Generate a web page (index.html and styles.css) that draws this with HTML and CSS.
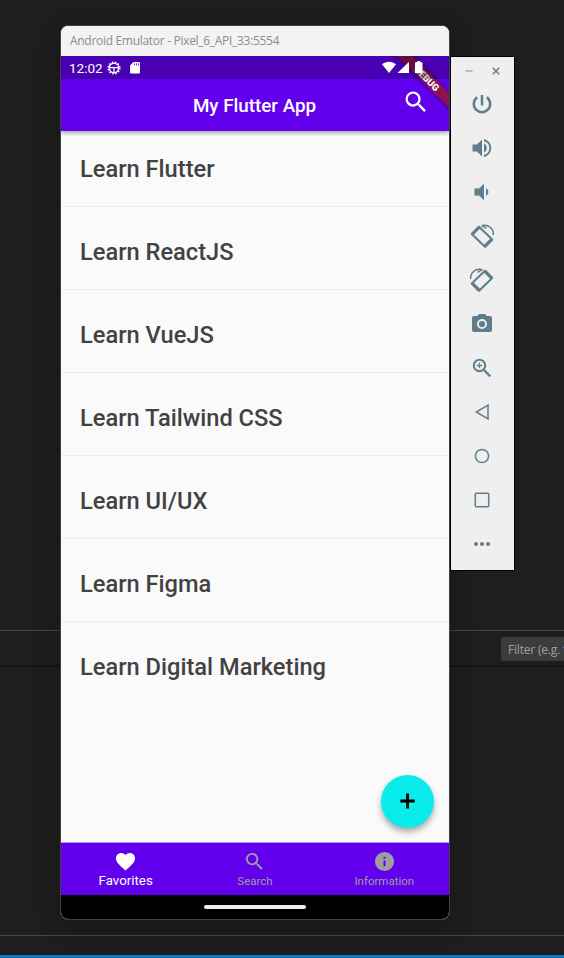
FILE: index.html
```html
<!DOCTYPE html>
<html lang="en">
<head>
<meta charset="utf-8">
<title>Android Emulator</title>
<link rel="stylesheet" href="styles.css">
</head>
<body>
<div class="desktop">
  <div class="editor">
    <div class="editor-top"></div>
    <div class="filter-bar"><div class="filter">Filter (e.g. t</div></div>
    <div class="editor-body"></div>
    <div class="editor-foot"></div>
    <div class="editor-status"></div>
  </div>

  <main class="phone">
    <div class="titlebar"><span>Android Emulator - Pixel_6_API_33:5554</span></div>
    <header class="top">
      <div class="statusbar">
        <span class="clock">12:02</span>
        <svg class="gear" width="14" height="14" viewBox="0 0 14 14" fill="none" stroke="#fff"><circle cx="7" cy="7" r="4.700" stroke-width="1.500"/><circle cx="7" cy="7" r="5.900" stroke-width="1.400" stroke-dasharray="1.600 1.490"/><path d="M3 6.700h8M7 7v4.200" stroke-width="1.200"/></svg>
        <svg class="sd" width="10" height="12" viewBox="0 0 10 12"><path fill="#fff" d="M3.500 0H9a1 1 0 0 1 1 1v9.500a1 1 0 0 1-1 1H1a1 1 0 0 1-1-1V3.500z"/><path stroke="#4b00b2" stroke-width=".8" d="M4.500 1.300v2M6.500 1.300v2M8.500 1.300v2"/></svg>
        <span class="signals">
          <svg width="38" height="14" viewBox="0 0 38 14" fill="#fff"><path d="M0 3.300C4-.1 10-.1 14 3.300L7 12z"/><path d="M27 .8V12H15.500z"/><path d="M33.700 1.300h1.500V0h3v1.300h1.600q.7 0 .7.700v9.500q0 .7-.7.700h-6.100q-.7 0-.7-.7V2q0-.7.7-.7z"/></svg>
        </span>
      </div>
      <div class="appbar">
        <h1>My Flutter App</h1>
        <svg class="search" width="28" height="28" viewBox="0 0 24 24" fill="#fff"><path d="M15.500 14h-.79l-.28-.27A6.471 6.471 0 0 0 16 9.500 6.500 6.500 0 1 0 9.500 16c1.610 0 3.090-.59 4.230-1.570l.27.28v.79l5 4.990L20.490 19l-4.990-5zm-6 0C7.010 14 5 11.990 5 9.500S7.010 5 9.500 5 14 7.010 14 9.500 11.990 14 9.500 14z"/></svg>
      </div>
      <div class="ribbon">DEBUG</div>
    </header>
    <ul class="list">
      <li>Learn Flutter</li>
      <li>Learn ReactJS</li>
      <li>Learn VueJS</li>
      <li>Learn Tailwind CSS</li>
      <li>Learn UI/UX</li>
      <li>Learn Figma</li>
      <li>Learn Digital Marketing</li>
    </ul>
    <button class="fab" aria-label="Add"><svg width="15" height="16" viewBox="0 0 15 16"><path d="M7.500 .5v15M.3 8h14.400" stroke="#000" stroke-width="3"/></svg></button>
    <nav class="nav">
      <div class="tab active"><svg width="23" height="23" viewBox="0 0 24 24"><path d="m12 21.350-1.450-1.320C5.400 15.360 2 12.280 2 8.500 2 5.420 4.420 3 7.500 3c1.740 0 3.410.81 4.500 2.090C13.090 3.810 14.760 3 16.500 3 19.580 3 22 5.420 22 8.500c0 3.780-3.400 6.860-8.550 11.540z"/></svg><span>Favorites</span></div>
      <div class="tab"><svg width="23" height="23" viewBox="0 0 24 24"><path d="M15.500 14h-.79l-.28-.27A6.471 6.471 0 0 0 16 9.500 6.500 6.500 0 1 0 9.500 16c1.610 0 3.090-.59 4.230-1.570l.27.28v.79l5 4.990L20.490 19l-4.990-5zm-6 0C7.010 14 5 11.990 5 9.500S7.010 5 9.500 5 14 7.010 14 9.500 11.990 14 9.500 14z"/></svg><span>Search</span></div>
      <div class="tab"><svg width="23" height="23" viewBox="0 0 24 24"><path fill-rule="evenodd" d="M12 2a10 10 0 1 0 0 20 10 10 0 0 0 0-20zm1 15h-2v-6h2zm0-8h-2V7h2z"/></svg><span>Information</span></div>
    </nav>
    <div class="gesture"><i></i></div>
  </main>

  <aside class="tools">
    <div class="window-buttons">
      <svg width="8" height="8" viewBox="0 0 8 8"><path d="M.5 4h7" stroke="#a5b5bd" stroke-width="1.600"/></svg>
      <svg width="8" height="8" viewBox="0 0 8 8"><path d="M.8.8l6.400 6.400M7.200.8L.8 7.200" stroke="#617d8b" stroke-width="1.400"/></svg>
    </div>
    <div class="tool"><svg viewBox="0 0 24 24" class="line thick"><path d="M12 3v10.500M7.200 5.300a8.200 8.200 0 1 0 9.600 0"/></svg></div>
    <div class="tool"><svg viewBox="0 0 24 24"><path d="M2.500 8.500v7H7l5 5v-17l-5 5zM14 7.500v9a5 5 0 0 0 0-9zM14 3v2.200a7 7 0 0 1 0 13.600V21a9.200 9.200 0 0 0 0-18z"/></svg></div>
    <div class="tool"><svg viewBox="0 0 24 24"><path d="M4.500 8.500v7H9l5 4.700V3.800l-5 4.700zM16 8v8a4.500 4.500 0 0 0 0-8z"/></svg></div>
    <div class="tool"><svg viewBox="0 0 24 24" class="line"><path d="M9.300 3L2 10.300l12.700 12.200 7.300-7.300z"/><path d="M9.300 3L2 10.300M14.700 22.500l7.300-7.300" stroke-width="3.200"/><path d="M12.500 1.500C18 0 24 4.500 23.300 11" stroke-width="1.500"/><path d="M11.500 1.300l5 3" stroke-width="1.500"/></svg></div>
    <div class="tool"><svg viewBox="0 0 24 24" class="line"><path d="M14.700 3l7.300 7.300L9.300 22.500 2 15.200z"/><path d="M14.700 3l7.300 7.300M9.300 22.500L2 15.200" stroke-width="3.200"/><path d="M11.500 1.500C6 0 0 4.500.7 11" stroke-width="1.500"/><path d="M12.500 1.300l-5 3" stroke-width="1.500"/></svg></div>
    <div class="tool camera"><svg viewBox="0 0 24 24"><path fill-rule="evenodd" d="M9 3L7.200 5H4a2 2 0 0 0-2 2v12a2 2 0 0 0 2 2h16a2 2 0 0 0 2-2V7a2 2 0 0 0-2-2h-3.200L15 3zm3 5a5 5 0 1 1 0 10 5 5 0 0 1 0-10zm0 1.900a3.100 3.100 0 1 0 0 6.200 3.100 3.100 0 0 0 0-6.200z"/></svg></div>
    <div class="tool"><svg viewBox="0 0 24 24" class="line"><circle cx="9.500" cy="9.500" r="5.700"/><path d="M14 14l6.300 6.300" stroke-width="2.400"/><path d="M9.500 6.800v5.400M6.800 9.500h5.400" stroke-width="1.300"/></svg></div>
    <div class="tool"><svg viewBox="0 0 24 24" class="line thin"><path d="M18 5v14L6.300 12z"/></svg></div>
    <div class="tool"><svg viewBox="0 0 24 24" class="line thin"><circle cx="12" cy="12" r="6.600"/></svg></div>
    <div class="tool"><svg viewBox="0 0 24 24" class="line thin"><rect x="5.300" y="5.300" width="13.400" height="13.400" rx="1"/></svg></div>
    <div class="tool"><svg viewBox="0 0 24 24"><circle cx="6" cy="12" r="2"/><circle cx="12" cy="12" r="2"/><circle cx="18" cy="12" r="2"/></svg></div>
  </aside>
</div>
</body>
</html>
```
FILE: styles.css
```css
* { box-sizing: border-box; }
body { margin: 0; background: #1e1e1e; font-family: Roboto, sans-serif; overflow: hidden; }
.desktop { position: relative; width: 564px; height: 958px; overflow: hidden; }

.editor { display: flex; flex-direction: column; height: 958px; background: #1e1e1e; }
.editor-top { height: 631px; border-bottom: 1px solid #444; }
.filter-bar { height: 34px; padding-top: 6px; display: flex; justify-content: flex-end; }
.filter { width: 63px; height: 24px; padding-left: 7px; border-radius: 2px 0 0 2px; background: #3c3c3c; color: #a0a0a0; font: 12px/26px "Open Sans", sans-serif; letter-spacing: -0.200px; white-space: nowrap; overflow: hidden; }
.editor-body { height: 270px; border-top: 2px solid #141414; }
.editor-foot { height: 20px; border-top: 1px solid #444; }
.editor-status { height: 3px; background: #0b76c5; }

.phone { position: absolute; left: 60px; top: 25px; width: 390px; height: 895px; display: flex; flex-direction: column; border: 1px solid #414141; border-radius: 8px; background: #fafafa; overflow: hidden; box-shadow: 0 6px 24px rgba(0, 0, 0, .3); }
.titlebar { height: 30px; padding-left: 9px; background: #f3f3f3; color: #8c8c8c; font: 12px/30px "Open Sans", sans-serif; letter-spacing: -0.300px; white-space: nowrap; }
.top { position: relative; z-index: 1; height: 75px; flex: none; background: #6200ee; color: #fff; box-shadow: 0 2px 4px rgba(0, 0, 0, .35); clip-path: inset(0 0 -10px 0); }
.top::before { content: ""; position: absolute; z-index: 1; inset: 0 0 auto; height: 23px; background: rgba(0, 0, 0, .25); }
.statusbar { position: relative; z-index: 2; height: 23px; display: flex; align-items: center; padding-left: 8px; }
.clock { width: 33px; font-size: 13.500px; line-height: 24px; }
.gear { margin-left: 5px; }
.sd { margin-left: 9px; }
.signals { height: 14px; margin: 0 29px 0 auto; }
.signals svg { display: block; overflow: visible; }
.appbar { height: 52px; display: grid; grid-template-columns: 1fr 28px; align-items: center; padding-right: 19px; }
h1 { margin: 0; padding: 2px 0 0 46px; text-align: center; font-size: 18.800px; line-height: 24px; font-weight: 500; white-space: nowrap; }
.search { margin-top: -6px; }
.ribbon { position: absolute; left: 315.500px; top: 16.800px; width: 100px; height: 11.400px; transform: rotate(45deg); background: #8d1253; box-shadow: 0 0 5px rgba(0, 0, 0, .5); color: #fff; text-align: center; font-size: 9.500px; line-height: 11.400px; font-weight: 900; }

.list { margin: 0; padding: 0; list-style: none; height: 711px; flex: none; }
.list li { height: 83px; padding: 4px 0 0 19px; border-bottom: 1px solid #ececec; color: #424242; font-size: 23.650px; line-height: 82px; font-weight: 500; }
.list li:first-child { height: 76px; padding-top: 1px; line-height: 75px; }
.list li:last-child { border: 0; }
.fab { position: absolute; right: 15px; bottom: 91px; width: 53px; height: 53px; padding: 0 1px 1px 0; border: 0; border-radius: 50%; background: #0aebec; display: grid; place-items: center; box-shadow: 0 4px 6px rgba(0, 0, 0, .32); }
.nav { height: 53px; flex: none; display: grid; grid-template-columns: repeat(3, 1fr); border-top: 1px solid #b598e3; background: #6200ee; }
.tab { display: flex; flex-direction: column; align-items: center; padding-top: 7px; color: #9e9e9e; font-size: 11.500px; line-height: 16px; }
.tab svg { fill: currentColor; }
.tab.active { color: #fff; font-size: 13.300px; }
.gesture { height: 25px; background: #000; display: flex; justify-content: center; padding-top: 10px; }
.gesture i { width: 102px; height: 4px; border-radius: 2px; background: #eee; }

.tools { position: absolute; left: 450px; top: 56px; width: 65px; height: 515px; border: 1px solid #000; background: #efefef; display: flex; flex-direction: column; }
.window-buttons { height: 25px; display: flex; justify-content: space-between; padding: 10px 14px 0; }
.window-buttons svg { display: block; }
.tool { height: 44px; display: grid; place-items: center; padding-right: 1px; }
.camera { padding-bottom: 2px; }
.tool svg { width: 24px; height: 24px; overflow: visible; fill: #617d8b; }
.tool .line { fill: none; stroke: #617d8b; stroke-width: 2; }
.tool .thick { stroke-width: 2.500; }
.tool .thin { stroke-width: 1.500; }
```
